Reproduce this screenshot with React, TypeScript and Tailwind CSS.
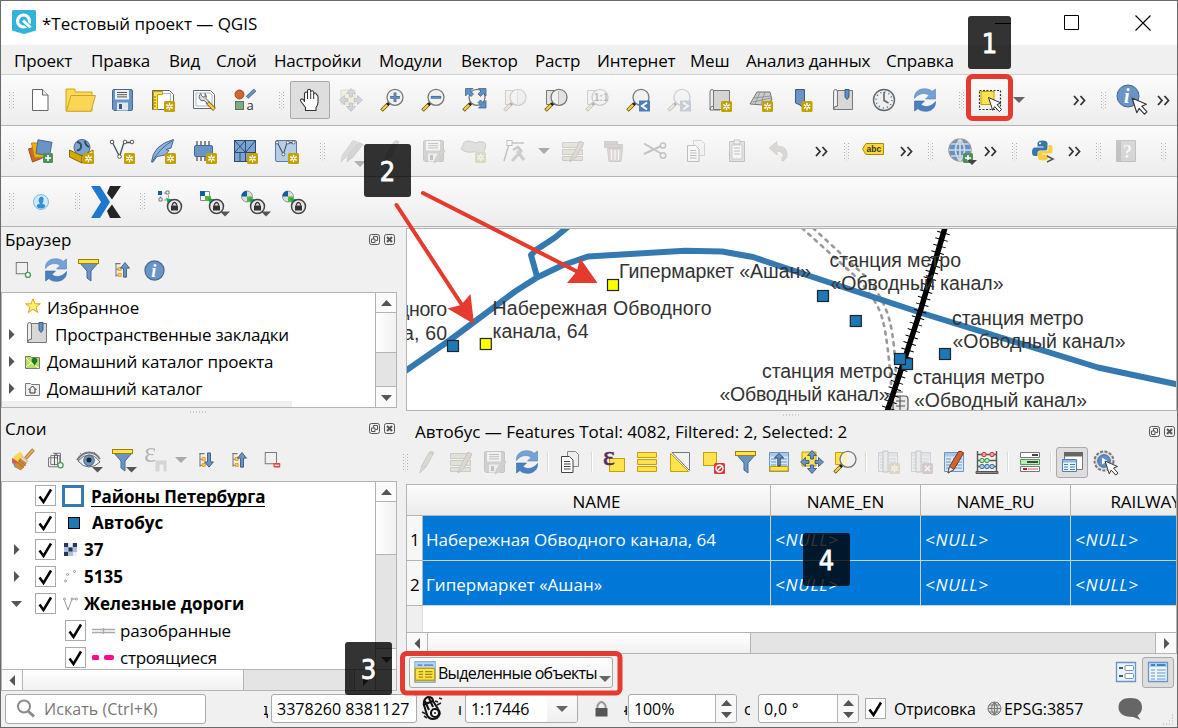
import React from "react";

type Kids = { children?: React.ReactNode };

/* ---------- drawing primitives ---------- */

const Svg = ({ children, s = 24, faded = false }: Kids & { s?: number; faded?: boolean }) => (
  <svg width={s} height={s} viewBox="0 0 24 24" fill="none" className={faded ? "shrink-0 overflow-visible opacity-30 grayscale-[60%]" : "shrink-0 overflow-visible"}>
    {children}
  </svg>
);

const Badge = ({ x = 13, y = 13 }: { x?: number; y?: number }) => (
  <g transform={`translate(${x} ${y})`}>
    <rect width="11" height="11" rx="1.500" fill="#c4a000" />
    <path d="M5.500 1.800v7.400M2.300 3.600l6.400 3.800M8.700 3.600L2.300 7.400" stroke="#fff" strokeWidth="1.400" />
    <circle cx="5.500" cy="5.500" r="1" fill="#c4a000" />
  </g>
);

const PlusBadge = ({ x = 14, y = 14 }: { x?: number; y?: number }) => (
  <g transform={`translate(${x} ${y})`}>
    <rect width="10" height="10" rx="1.500" fill="#4f8f5b" />
    <path d="M5 2v6M2 5h6" stroke="#fff" strokeWidth="1.600" />
  </g>
);

const Lens = ({ children }: Kids) => (
  <>
    <path d="M1.500 22.500L8 16" stroke="#5c4a10" strokeWidth="3.600" />
    <path d="M2 22L7.600 16.400" stroke="#fcd03a" strokeWidth="2.200" />
    <path d="M7.200 17l2.600-2.600" stroke="#222" strokeWidth="3" />
    <circle cx="15" cy="9.300" r="8" fill="#f1f1ee" stroke="#77787a" strokeWidth="1.300" />
    {children}
  </>
);

const Down = ({ dim = false }: { dim?: boolean }) => (
  <svg width="12" height="6" viewBox="0 0 12 6" className="shrink-0">
    <path d="M0 0h12L6 6z" fill={dim ? "#aaa" : "#666"} />
  </svg>
);

const CornerDown = () => <path d="M15 19h11l-5.500 5.500z" fill="#555" />;

/* ---------- icons ---------- */

const NewDoc = () => (
  <Svg><path d="M4.500 1.500h10l5.500 5.500v15.500h-15.500z" fill="#fff" stroke="#666" /><path d="M14.500 1.500v5.500h5.500" stroke="#666" fill="#eee" /></Svg>
);
const OpenFolder = () => (
  <svg width="31" height="24" viewBox="0 0 31 24" className="shrink-0">
    <path d="M1 23V1h9v3h17v19z" fill="#ffd94f" stroke="#c9a42b" />
    <path d="M1.500 23.200L6 7.500h24.500l-4.500 15.700z" fill="#fcd557" stroke="#c9a42b" />
  </svg>
);
const Save = ({ pen = false }: { pen?: boolean }) => (
  <Svg faded={pen}>
    <path d="M2.500 3q0-1.500 1.500-1.500h17q1.500 0 1.500 1.500v18q0 1.500-1.500 1.500H4L2.500 21z" fill={pen ? "#888" : "#6a94c5"} stroke={pen ? "#666" : "#48698f"} />
    <path d="M5 2h14v9.500H5z" fill="#eef1f4" /><path d="M7 4.500h10M7 6.700h10M7 8.900h10" stroke="#555" />
    <path d="M7 14.500h11v8H7z" fill="#dfe6ee" /><path d="M9 16h3v5H9z" fill="#3c5a80" />
    {pen && <path d="M13 24l1.500-4.500L21 10l3 2-6.500 9.500z" fill="#b9824a" stroke="#777" />}
  </Svg>
);
const NewLayout = () => (
  <Svg>
    <path d="M1.500 2.500h17l4 4v15h-21z" fill="#fff" stroke="#666" /><path d="M12 5.500h7.500V17" stroke="#9cb6d6" />
    <path d="M2.500 3.500h9v3h-5v15h-4z" fill="#fee34f" stroke="#c4a000" />
    <path d="M3 9h2M3 12h2M3 15h2M3 18h2" stroke="#806800" /><Badge />
  </Svg>
);
const LayoutManager = () => (
  <Svg>
    <path d="M1.500 2.500h17l4 4v14h-21z" fill="#fff" stroke="#666" /><path d="M4 5h14l2 2v11H4z" stroke="#9cb6d6" />
    <path d="M15 14l7.500 7.500" stroke="#8a6c1a" strokeWidth="4" /><path d="M15 14l7 7" stroke="#fcd557" strokeWidth="2.200" />
    <path d="M9 5.500a4 4 0 0 0-1 6q2 2 4 1l3.500 3 1.500-2-3-3q1-3-1-5l.300 3-2.300.700-1.500-1.500z" fill="#d9d9d9" stroke="#666" />
  </Svg>
);
const StyleMgr = () => (
  <Svg>
    <circle cx="6.500" cy="6.500" r="4.500" fill="#d0652f" stroke="#a14a1c" /><path d="M14 9.500L22 2" stroke="#48698f" strokeWidth="3.600" /><path d="M14 9.500L22 2" stroke="#6a94c5" strokeWidth="2" />
    <rect x="2.500" y="13.500" width="8" height="8" fill="#82a987" stroke="#4f7a55" />
    <text x="13.500" y="21.500" fontFamily="Open Sans" fontSize="13" fill="#333">a</text>
  </Svg>
);
const Hand = () => (
  <Svg>
    <path d="M7.500 22.500v-3L3 13.500q-1.200-2 .500-2.500t3 2.500V5.500q.200-1.500 1.500-1.500t1.500 1.500V3q.100-1.700 1.600-1.700T12.700 3v1q.300-1.400 1.600-1.300T15.700 4.500V6q.400-1.200 1.600-1t1.200 1.600q1.500.400 1.500 2.400v5q0 3-2 5.500v3z" fill="#fff" stroke="#333" strokeWidth="1.100" strokeLinejoin="round" />
    <path d="M9.500 5.500V11M12.700 4.500V11M15.700 6V11" stroke="#333" />
  </Svg>
);
const FourArrows = ({ faded = false }: { faded?: boolean }) => (
  <Svg faded={faded}>
    <path d="M2 2h14v14H2z" fill="#fee34f" stroke="#c4a000" />
    <path d="M12 .5l4.500 5h-3V9h-3V5.500h-3zM12 23.500l4.500-5h-3V15h-3v3.500h-3zM.5 12l5-4.500v3H9v3H5.500v3zM23.500 12l-5-4.500v3H15v3h3.500v3z" fill="#6a94c5" stroke="#3d5a80" strokeWidth=".9" />
  </Svg>
);
const ZoomIn = () => <Svg><Lens><path d="M15 4.500v9.600M10.200 9.300h9.600" stroke="#3f6796" strokeWidth="2.800" /><path d="M15 5v8.600M10.700 9.300h8.600" stroke="#6a94c5" strokeWidth="1.200" /></Lens></Svg>;
const ZoomOut = () => <Svg><Lens><path d="M9.800 9.300h10.400" stroke="#3f6796" strokeWidth="2.800" /><path d="M10.300 9.300h9.400" stroke="#6a94c5" strokeWidth="1.200" /></Lens></Svg>;
const ZoomFull = () => (
  <Svg><Lens />
    <path d="M3.500.500h7.500l-2.500 2.500 3 3-2.500 2.500-3-3L3.500 8zM24 .500h-7.500L19 3l-3 3 2.500 2.500 3-3L24 8zM24 20h-7.500l2.500-2.500-3-3 2.500-2.500 3 3 2.500-2.500z" fill="#5f8fc4" stroke="#3f6796" strokeWidth=".8" />
  </Svg>
);
const ZoomSel = ({ c, faded = false }: { c: string; faded?: boolean }) => (
  <Svg faded={faded}><path d="M2.500 2.500h12v14h-12z" fill={c} stroke="#777" /><Lens><path d="M15 2v14.600q5-1 7-5v-5q-2-4-7-4.600z" fill="#d8d8d4" opacity=".6" /><path d="M14.500 3v13" stroke="#bbb" /></Lens></Svg>
);
const ZoomNative = () => (
  <Svg faded><path d="M2.500 2.500h12v14h-12z" fill="#eee" stroke="#777" /><Lens /><text x="9" y="13" fontFamily="Liberation Sans" fontWeight="bold" fontSize="10" fill="#333">1:1</text></Svg>
);
const ZoomNav = ({ right = false }: { right?: boolean }) => (
  <Svg faded={right}><Lens /><rect x="13" y="12.500" width="11" height="11" fill="#4a7fb8" />
    <path d={right ? "M16 14.500l5 3.500-5 3.500" : "M21 14.500L16 18l5 3.500"} stroke="#fff" strokeWidth="2" />
  </Svg>
);
const MapView = () => (
  <Svg><path d="M5.500 2.500h16v19H5.500z" fill="#d5d5d3" stroke="#777" /><path d="M2 4q0-2.500 2-2.500T5.500 4v14q-3.500 0-3.500 4z" fill="#eee" stroke="#777" /><path d="M2 22h10" stroke="#777" /><Badge /></Svg>
);
const Mesh3d = () => (
  <Svg><path d="M1 16L8 4h13l2 8-9 5z" fill="#ccc" stroke="#777" /><path d="M5 10l17-2M3.500 14l19-4M11 4L6 16M16 4l-4 12" stroke="#888" strokeWidth=".8" /><Badge /></Svg>
);
const BookmarkNew = () => (
  <Svg><path d="M5.500 1.500h9v20L10 17l-4.500-2z" fill="#6a94c5" stroke="#3d5a80" /><Badge x={11.500} /></Svg>
);
const Bookmarks = () => (
  <Svg>
    <path d="M6.500 2.500h15v19h-19q0-3.500 4-3.500z" fill="#d8d8d6" stroke="#777" /><path d="M2.500 4q0-2.500 2-2.500T6.500 4v14q-4 0-4 3.500z" fill="#eee" stroke="#777" />
    <path d="M14 1.500h4V9l-2 2.500L14 9z" fill="#5f8fc4" stroke="#3d5a80" />
  </Svg>
);
const Clock = () => (
  <Svg><circle cx="12" cy="12" r="10.500" fill="#eee" stroke="#666" strokeWidth="1.400" /><circle cx="12" cy="12" r="8" stroke="#4a7fb8" strokeWidth="1.500" strokeDasharray="1.200 3" /><path d="M12 4v8.500l4.500 2.500" stroke="#666" strokeWidth="1.600" /></Svg>
);
const Refresh = () => (
  <Svg>
    <path d="M1.500 10.500C1 4 6 .7 11.500.7c3.500 0 6 1 7.500 2.800L22.500 1v10h-10L16 7.500C13 4.500 6 4.500 1.500 10.500z" fill="#76a1d4" stroke="#5483ba" strokeWidth=".6" />
    <path d="M22.500 13.500C23 20 18 23.300 12.500 23.300c-3.500 0-6-1-7.500-2.800L1.500 23V13h10L8 16.500c3 3 10 3 14.500-3z" fill="#4a80c0" stroke="#376da8" strokeWidth=".6" />
  </Svg>
);
const Pointer = ({ x = 0, y = 0 }: { x?: number; y?: number }) => (
  <path transform={`translate(${x} ${y})`} d="M0 0l12.500 5.500-4 1.600 4.500 5-2.200 2-4.600-5-2 3.700z" fill="#fff" stroke="#333" strokeWidth="1" strokeLinejoin="round" />
);
const SelectIcon = () => (
  <Svg><rect x="1.500" y="2.500" width="21" height="19" stroke="#333" strokeWidth="1.200" strokeDasharray="2 1.500" /><rect x="3" y="3.500" width="13" height="13" fill="#fee34f" stroke="#c4a000" /><Pointer x={10.500} y={9.500} /></Svg>
);
const Identify = () => (
  <svg width="34" height="32" viewBox="0 0 34 32" className="shrink-0"><circle cx="13" cy="12" r="11" fill="#6a94c5" stroke="#48698f" /><text x="9" y="19" fontFamily="Liberation Serif" fontStyle="italic" fontWeight="bold" fontSize="20" fill="#fff">i</text><g transform="translate(17 14) scale(1.150)"><Pointer /></g></svg>
);
const InfoIcon = () => (
  <Svg s={23}><circle cx="12" cy="12" r="10" fill="#6a94c5" stroke="#48698f" strokeWidth="1.200" /><text x="8.500" y="18.500" fontFamily="Liberation Serif" fontStyle="italic" fontWeight="bold" fontSize="19" fill="#fff">i</text></Svg>
);
const Sources = () => (
  <Svg><path d="M.500 10l10-3 4 12-10 4z" fill="#d0652f" stroke="#a14a1c" /><path d="M3.500 4h12v14l-9 1z" fill="#f0b000" stroke="#b58900" /><path d="M10 .800l14 2.500-2.500 13.500L8 14.500z" fill="#6a94c5" stroke="#48698f" /><PlusBadge x={15} y={14} /></Svg>
);
const Geopackage = () => (
  <Svg><circle cx="13" cy="8.500" r="8" fill="#7fa3cf" stroke="#48698f" /><path d="M8 3q5 1 4 5t-4 3M16 2q0 4 4 6" stroke="#2e4a6d" strokeWidth="2" /><path d="M.500 11l12.500 6v7l-12.500-6z" fill="#d8a800" stroke="#8a6c00" /><path d="M13 17l11-6v7l-11 6z" fill="#fdea6a" stroke="#8a6c00" /><Badge x={14} y={14} /></Svg>
);
const VLine = () => (
  <><path d="M2.500 3.500l7 14L14 3.500h7" stroke="#3f4f60" strokeWidth="1.300" /><circle cx="2" cy="3" r="1.800" fill="#fff" stroke="#555" /><circle cx="9.500" cy="17.500" r="1.800" fill="#fff" stroke="#555" /><circle cx="15" cy="3" r="1.800" fill="#fff" stroke="#555" /><circle cx="22" cy="3" r="1.800" fill="#fff" stroke="#555" /></>
);
const Shapefile = () => <Svg><VLine /><Badge x={14} y={14} /></Svg>;
const Feather = () => (
  <Svg><path d="M.500 23Q2 6 22.500.500L20 9l-5 1.500 3 1-4 4.500-8 1.500L2 23z" fill="#8fb2dc" stroke="#48698f" /><path d="M1 23Q8 10 21 2" stroke="#48698f" /><Badge x={14} y={14} /></Svg>
);
const Chip = () => (
  <Svg><path d="M5 2v20M9 2v20M13 2v20M17 2v20" stroke="#555" strokeWidth="1.300" /><rect x="2.500" y="6.500" width="18" height="11" rx="1.500" fill="#6a94c5" stroke="#48698f" /><Badge x={14} y={14} /></Svg>
);
const MeshLayer = () => (
  <Svg><rect x="1.500" y="1.500" width="21" height="21" fill="#7ba3d3" stroke="#2e4a6d" /><path d="M1.500 13.500h21M12.500 1.500v21M1.500 1.500l11 12M12.500 1.500l-11 12M12.500 13.500l10-12M7 13.500v9" stroke="#2e4a6d" /><Badge x={14} y={14} /></Svg>
);
const Virtual = () => (
  <Svg><rect x="1.500" y="1.500" width="21" height="21" rx="1.500" fill="#b7cde6" stroke="#587ba6" /><g transform="translate(1.500 1) scale(.82)"><VLine /></g><Badge x={14} y={14} /></Svg>
);
const Pencil = ({ second = false }: { second?: boolean }) => (
  <Svg faded>
    {second ? (
      <><path d="M2 23l1.500-7L14 1.500l5 2L8 17z" fill="#b59b90" stroke="#888" /><path d="M8 23l1.500-7L20 3.500l4 2L14 18z" fill="#a08a80" stroke="#777" /><path d="M15 22h12l-6 6z" fill="#222" /></>
    ) : (
      <><path d="M5 23l1.500-7L14 2.500q2-2 5 0L11 17z" fill="#bba27a" stroke="#777" /><path d="M6.500 16l4.500 1M14 2.500l5 1.500" stroke="#777" /></>
    )}
  </Svg>
);
const Polygon = () => <Svg faded><path d="M1 7q0-5 5-5t7 2q4-2 8-1t2 7-6 4-7-1-8-1-1-5z" fill="#aab5a0" stroke="#666" /><Badge x={13} y={13} /></Svg>;
const Vertex = () => <Svg faded><path d="M1 22L6 5M9 4h12" stroke="#555" strokeWidth="1.500" /><rect x="4" y="1.500" width="5" height="5" fill="#fff" stroke="#444" /><path d="M9 22l10-11M14 12l7 9" stroke="#8a7a60" strokeWidth="3" /><path d="M10 11l5-3 3 4" stroke="#666" strokeWidth="2.500" /></Svg>;
const MultiEdit = () => <Svg faded><path d="M1.500 3.500h20v5h-20zM1.500 10.500h20v5h-20zM1.500 17.500h20v4h-20z" fill="#c9c35c" stroke="#777" /><path d="M9 23l1.500-5L19 2l4 2-8.500 15z" fill="#c99a68" stroke="#666" /></Svg>;
const Trash = () => <Svg faded><path d="M2.500 2.500h13v3h-13zM2.500 5.500h18v3h-18z" fill="#b97a60" stroke="#777" /><path d="M5.500 9.500h15l-1.500 13h-12z" fill="#d98a8a" stroke="#777" /><path d="M9.500 11v10M13 11v10M16.500 11v10" stroke="#fff" strokeWidth="1.300" /></Svg>;
const Scissors = () => <Svg faded><path d="M1 4.500l17 10M1 15l17-8" stroke="#555" strokeWidth="2" /><circle cx="20" cy="6.500" r="2.600" stroke="#555" strokeWidth="1.500" /><circle cx="20" cy="16.500" r="2.800" stroke="#555" strokeWidth="1.500" /></Svg>;
const Copy = ({ faded = false }: { faded?: boolean }) => (
  <Svg faded={faded}><path d="M9.500 1.500h8l3 3v12h-11z" fill="#eee" stroke="#888" /><path d="M3.500 6.500h8l3.500 3.500v12.500H3.500z" fill="#fff" stroke="#444" /><path d="M6 11.500h6M6 14h6.500M6 16.500h6.500M6 19h6.500" stroke="#444" /></Svg>
);
const Paste = () => <Svg faded><path d="M4.500 2.500h15v20h-15z" fill="#bbb" stroke="#555" /><path d="M7 6h10v14H7z" fill="#fff" stroke="#777" /><path d="M9 9h6M9 12h6M9 15h6" stroke="#444" /><path d="M9 1h6v4H9z" fill="#ddd" stroke="#555" /></Svg>;
const Undo = () => <Svg faded><path d="M3 9l8-6.500V7q10 0 10 8 0 6-5 7v-3.500q2.500-1.500.500-4T11 12v4z" fill="#b9907a" stroke="#987" /></Svg>;
const AbcTag = () => (
  <svg width="22" height="12" viewBox="0 0 22 12" className="mb-1 shrink-0"><path d="M.500 6L4 .500h17.500v11H4z" fill="#fdd835" stroke="#a88a00" /><text x="4.500" y="9" fontFamily="Liberation Sans" fontWeight="bold" fontSize="8.500" fill="#333">abc</text></svg>
);
const Globe = () => (
  <Svg><circle cx="12" cy="11" r="11" fill="#5e93cf" stroke="#9a9a9a" strokeWidth="1.500" /><path d="M12 0v22M1 11h22M3 5h18M3 17h18M12 0Q3 11 12 22M12 0q9 11 0 22" stroke="#d8d8d8" strokeWidth="1.700" /><PlusBadge x={15} y={14} /><path d="M19 21h10l-5 5z" fill="#444" /></Svg>
);
const Python = () => (
  <Svg><path d="M11.500 1.500q-5 0-5 3v3h6v1h-8.500q-3 0-3 4.500t3 4h2.500v-3q0-2.500 3-2.500h5q2 0 2-2.500V4.500q0-3-5-3z" fill="#3b76a8" /><path d="M12 21.500q5 0 5-3v-3h-6v-1h8.500q2 0 2-4.500t-2-4h-2v3q0 3-3 3h-5q-2.500 0-2.500 2.500v4q0 3 5 3z" fill="#fccf3a" /><circle cx="9" cy="4.200" r="1" fill="#fff" /><path d="M16 17l6 3-6 3" stroke="#555" strokeWidth="1.500" /></Svg>
);
const Help = () => <Svg faded><path d="M2.500 1.500h19v21h-19z" fill="#8f9499" stroke="#555" /><path d="M3 2h4v20H3z" fill="#555" /><text x="9" y="19" fontFamily="Liberation Serif" fontWeight="bold" fontSize="18" fill="#fff">?</text></Svg>;
const Person = () => (
  <svg width="16" height="16" viewBox="0 0 16 16"><circle cx="8" cy="8" r="7.500" fill="#d3e9f8" stroke="#7db9e4" /><path d="M8 2.500q3 0 2.500 3.500T9 9.500q3 .500 3.500 2.500-1 2.500-4.500 2.500T3.500 12Q4 10 7 9.500 5.500 8 5.500 6T8 2.500z" fill="#2d93da" /></svg>
);
const BigX = () => (
  <svg width="30" height="32" viewBox="0 0 30 32" className="shrink-0"><path d="M0 0h9l10 16L9 32H0l10-16z" fill="#1e78cf" /><path d="M19 0h11L21 13.500 16 7zM19 32h11L21 18.500 16 25z" fill="#252525" /></svg>
);
const SnapIcon = ({ kind, arrow = false }: { kind: number; arrow?: boolean }) => (
  <Svg>
    {kind === 0 && <><path d="M2.500 3h8v7h-8z" stroke="#888" strokeDasharray="2 1.500" /><rect y="1" width="4" height="4" fill="#0b5fa5" /><path d="M8 1h3v3H8zM1 8h3v3H1z" fill="#fff" stroke="#777" /></>}
    {kind === 1 && <><path d="M.500 1.500h9v9h-9z" fill="#fff" stroke="#888" /><path d="M0 1h5v5H0z" fill="#0b5fa5" /><path d="M5 6h6v5H5z" fill="#5cb531" /></>}
    {kind >= 2 && <><circle cx="6" cy="6.500" r="5.500" fill="#ddd" stroke="#999" /><path d="M6 1v5.500H.500Q.500 1 6 1z" fill="#0b5fa5" /><path d="M6 6.500h5.500Q11.500 12 6 12z" fill="#5cb531" /></>}
    <path d="M8 8l7 1.500-5 5z" fill="#13a861" />
    <circle cx="16.500" cy="16.500" r="7" fill="#e8e8e8" stroke="#444" strokeWidth="1.500" /><path d="M13 15.500h7v5h-7z" fill="#333" /><path d="M14.500 15.500v-1.500q2-3 4 0v1.500" stroke="#333" strokeWidth="1.300" />
    {arrow && <path d="M20 21.500h10l-5 5z" fill="#555" />}
  </Svg>
);
const AddBox = ({ minus = false }: { minus?: boolean }) => (
  <Svg s={18}>{minus ? <><rect x="3" y="2" width="15" height="15" stroke="#777" strokeWidth="1.300" /><rect x="14" y="16" width="9" height="6" rx="1" fill="#e04545" /><path d="M15.500 19h6" stroke="#fff" strokeWidth="1.500" /></> : <><rect x="3" y="2" width="15" height="15" stroke="#777" strokeWidth="1.300" /><circle cx="18.500" cy="18.500" r="3.300" fill="#fff" stroke="#4f9a5e" strokeWidth="1.800" /></>}</Svg>
);
const Funnel = ({ arrow = false }: { arrow?: boolean }) => (
  <Svg><path d="M2.500 4.500h19L14 13v10l-4-3v-7z" fill="#6a94c5" stroke="#48698f" /><rect x="1.500" y="1.500" width="20" height="4" fill="#fee34f" stroke="#9a8200" />{arrow && <CornerDown />}</Svg>
);
const Collapse = ({ down = false }: { down?: boolean }) => (
  <Svg s={18}><path d="M3 3.500h7M4 4v17M4 11h3M4 19h3" stroke="#777" strokeWidth="1.400" /><path d="M7 8.500h4v4H7zM7 16.500h4v4H7z" fill="#fcd557" stroke="#e58a00" /><path d={down ? "M14 2.500h4v12h4l-6 7-6-7h4z" : "M14 21.500h4v-12h4l-6-7.500-6 7.500h4z"} fill="#6a94c5" stroke="#3d5a80" strokeWidth="1.200" /></Svg>
);
const Star = () => <svg width="16" height="16" viewBox="0 0 16 16"><path d="M8 .8l2 5h5.300l-4.200 3.300 1.600 5.400L8 11.300l-4.700 3.200 1.600-5.400L.700 5.800H6z" fill="#fdf06a" stroke="#dba520" /></svg>;
const Brush = () => (
  <Svg>
    <path d="M1 13q3-8 9-9l3 5-8 8z" fill="#fcd94a" /><path d="M1 10l5 3 1 6-6-4z" fill="#e5544a" /><path d="M1.500 14l6 3 2 5-6-3z" fill="#6a94c5" />
    <path d="M9 10l7 5-6 7.500-7-4z" fill="#c98a3c" /><path d="M8 12l7 6M6 14l7 6" stroke="#9c6522" strokeWidth=".7" />
    <path d="M10 8l7 6" stroke="#c9c9c9" strokeWidth="2" /><path d="M14.500 10.500L22.500 1.500" stroke="#b77b2b" strokeWidth="3.600" /><path d="M15 10L22 2" stroke="#e6b160" strokeWidth="1.800" />
  </Svg>
);
const Group = () => <Svg s={18}><path d="M2 9h12v12H2zM5 6h12v12H5zM8 3h10v13" stroke="#777" strokeWidth="1.300" /><path d="M10 19V6l2-3 2 3v6" stroke="#555" strokeWidth="1.300" /><circle cx="18" cy="19" r="3.500" fill="#fff" stroke="#4f9a5e" strokeWidth="1.800" /></Svg>;
const Eye = () => <Svg><path d="M0 12Q5 4.500 12 4.500T23 11" stroke="#777" strokeWidth="1.800" /><path d="M1 13Q6 7 12 7t11 7q-5 5-11 5T1 13z" fill="#eef1f4" stroke="#666" /><circle cx="12" cy="12.500" r="5.300" fill="#6a94c5" stroke="#48698f" /><circle cx="12" cy="12" r="2.500" fill="#222" /><path d="M3 5l2 2M18 4l-2 2" stroke="#888" /><CornerDown /></Svg>;
const EpsFilter = () => <Svg faded><text x="0" y="14" fontFamily="Liberation Serif" fontSize="29" fill="#333">ε</text><path d="M11.500 12.500h11v11h-3v-7h-4v7h-4z" fill="#999" /></Svg>;
const Eps = () => <Svg><rect x="7.500" y="8.500" width="15" height="13" fill="#fee34f" stroke="#c4a000" /><text x="1" y="15" fontFamily="Liberation Serif" fontSize="28" fill="#5a2a5a" stroke="#5a2a5a" strokeWidth=".6">ε</text></Svg>;
const SelAll = () => <Svg><path d="M2.500 2.500h19v5h-19zM2.500 9.500h19v5h-19zM2.500 16.500h19v5h-19z" fill="#fee34f" stroke="#c4a000" /></Svg>;
const Invert = () => <Svg><path d="M4 2.500h17.500v18z" fill="#f2f2f2" stroke="#777" /><path d="M2.500 3.500v18h18z" fill="#fee34f" stroke="#c4a000" /></Svg>;
const Deselect = () => <Svg><rect x="2.500" y="2.500" width="13" height="13" fill="#fee34f" stroke="#c4a000" /><rect x="13" y="13" width="11" height="11" rx="1.500" fill="#d83a3a" /><circle cx="18.500" cy="18.500" r="3.500" stroke="#fff" strokeWidth="1.400" /><path d="M16 21l5-5" stroke="#fff" strokeWidth="1.400" /></Svg>;
const Sheet = () => <><path d="M2.500 2.500h19v19h-19z" fill="#d9e8f6" stroke="#6a94c5" /><path d="M3 3h18v3.500H3z" fill="#a9c8e8" /><path d="M4 9h5M11 9h9M4 12h5M11 12h9M4 15h5M11 15h9M4 18h5M11 18h9" stroke="#6a94c5" strokeWidth="1.100" /></>;
const MoveTop = () => <Svg><Sheet /><rect x="3" y="16.500" width="18" height="4.500" fill="#fee34f" stroke="#c4a000" /><path d="M10.800 16V8h-3.500L12 3.500 16.700 8h-3.500v8z" fill="#6a94c5" stroke="#2e4a6d" /></Svg>;
const ZoomYellow = () => <Svg><path d="M2.500 2.500h12v12h-12z" fill="#fee34f" stroke="#c4a000" /><Lens><path d="M9 6q2-4 5-4v14q-5-1-5-5z" fill="#fdf3a8" opacity=".7" /></Lens></Svg>;
const Column = ({ del = false }: { del?: boolean }) => <Svg faded><Sheet /><path d="M7 1h5v21H7z" fill="#ddd" stroke="#666" />{del ? <><rect x="13" y="13" width="11" height="11" rx="1.500" fill="#c66" /><path d="M16 16l5 5M21 16l-5 5" stroke="#fff" strokeWidth="1.600" /></> : <Badge />}</Svg>;
const EditSheet = () => <Svg><Sheet /><path d="M6 23l1.500-6.500L16.500 1.500q3-1 5 1.500L12 19.500z" fill="#d0652f" stroke="#7a3a16" /><path d="M6 23l1.500-6.500 4.500 3z" fill="#eed" stroke="#555" /></Svg>;
const Abacus = () => <Svg><path d="M2.500 1v20M21.500 1v20M3 4.500h18M3 10.500h18M3 16.500h18" stroke="#555" strokeWidth="1.400" /><path d="M1 21.500h22v2H1z" fill="#888" stroke="#555" /><g strokeWidth="1"><circle cx="9" cy="4.500" r="2.200" fill="#f3a0a0" stroke="#c03030" /><circle cx="17" cy="4.500" r="2.200" fill="#f3a0a0" stroke="#c03030" /><circle cx="7" cy="10.500" r="2.200" fill="#b6e8b0" stroke="#3f8f45" /><circle cx="12" cy="10.500" r="2.200" fill="#b6e8b0" stroke="#3f8f45" /><circle cx="7" cy="16.500" r="2.200" fill="#a9cdf0" stroke="#3f6796" /><circle cx="12" cy="16.500" r="2.200" fill="#a9cdf0" stroke="#3f6796" /><circle cx="17" cy="16.500" r="2.200" fill="#a9cdf0" stroke="#3f6796" /></g></Svg>;
const CondFormat = () => <Svg><path d="M2.500 2.500h19v5h-19z" fill="#fff" stroke="#777" /><path d="M2.500 9.500h19v5h-19z" fill="#b6f0b4" stroke="#4f9a5e" /><path d="M2.500 16.500h19v5h-19z" fill="#fff" stroke="#777" /><path d="M14 5h6M9 12h11" stroke="#444" strokeWidth="1.800" /><path d="M5 19h4" stroke="#b00" strokeWidth="1.800" /><path d="M10 19h10" stroke="#f3a0a0" strokeWidth="1.800" /></Svg>;
const Dock = () => <Svg><path d="M4.500 2.500h18v17h-18z" fill="#fff" stroke="#777" /><path d="M4 2h19v4.500H4z" fill="#666" /><path d="M2.500 9.500h14v12h-14z" fill="#eef5fc" stroke="#4a7fb8" /><path d="M3 10h13v2.500H3z" fill="#8fb8e2" /><path d="M4 14.500h4M10 14.500h5M4 17h4M10 17h5M4 19.500h4M10 19.500h5" stroke="#4a7fb8" /></Svg>;
const Action = () => <Svg><circle cx="11" cy="11" r="9.500" fill="#ddd" stroke="#777" strokeWidth="2" strokeDasharray="3 1.500" /><circle cx="11" cy="11" r="6.300" fill="#5f8fc4" stroke="#48698f" /><path d="M9 7.500l5.500 3.500L9 14.500z" fill="#fff" /><Pointer x={12} y={11} /></Svg>;
const FormTable = () => <Svg s={22}><path d="M1 1h22v22H1z" fill="#eef5fc" stroke="#6a94c5" strokeWidth="1.200" /><path d="M1.500 1.500h21v6h-21z" fill="#b5d2ef" /><path d="M4 4.500h5M11 4.500h10" stroke="#6a94c5" strokeWidth="2" /><path d="M1.500 8h21v13h-21z" fill="#fee34f" stroke="#c4a000" strokeWidth="1.500" /><path d="M5 11.500h5M12 11.500h8M5 14.500h5M12 14.500h8M5 17.500h5M12 17.500h8" stroke="#a88a00" strokeWidth="1.300" /></Svg>;
const FormView = () => <Svg><path d="M2.500 2.500h19v19h-19z" fill="#edf4fb" stroke="#6a94c5" strokeWidth="1.300" /><path d="M5 8h4M5 16h4" stroke="#3d5a80" strokeWidth="2" /><rect x="11" y="5.500" width="8.500" height="5" rx="1" fill="#fff" stroke="#6a94c5" /><rect x="11" y="13.500" width="8.500" height="5" rx="1" fill="#fff" stroke="#6a94c5" /></Svg>;
const TableView = () => <Svg><path d="M2.500 2.500h19v19h-19z" fill="#edf4fb" stroke="#6a94c5" strokeWidth="1.300" /><path d="M3 3h18v4H3z" fill="#a9d0f0" /><path d="M5 5h4M11 5h8.500" stroke="#4a7fb8" strokeWidth="1.800" /><path d="M5 10h4M11 10h8.500M5 13h4M11 13h8.500M5 16h4M11 16h8.500M5 19h4M11 19h8.500" stroke="#6a94c5" strokeWidth="1.200" /></Svg>;

/* ---------- shared controls ---------- */

const Slot = ({ children, w = "w-[41px]" }: Kids & { w?: string }) => <div className={`flex shrink-0 items-center justify-center ${w}`}>{children}</div>;

const Grip = ({ w }: { w: string }) => (
  <div className={`flex shrink-0 items-center justify-center ${w}`}>
    <svg width="5" height="17" className="overflow-visible"><path d="M.5 0v17M4.500 0v17" stroke="#b3b3b3" strokeDasharray="1 2" /><path d="M2.500 1.500v16" stroke="#ccc" strokeDasharray="1 2" /></svg>
  </div>
);

const More = ({ w }: { w: string }) => (
  <Slot w={w}><svg width="13" height="11" viewBox="0 0 13 11"><path d="M1 1l4 4.500L1 10M7.500 1l4 4.500-4 4.500" fill="none" stroke="#333" strokeWidth="1.800" /></svg></Slot>
);

const Bar = ({ children, h = "h-[51px]" }: Kids & { h?: string }) => (
  <div className={`flex shrink-0 items-center overflow-hidden border-b border-[#b4b4b4] bg-linear-to-b from-[#fbfbfb] to-[#ededed] ${h}`}>{children}</div>
);

const Tri = ({ d }: { d: "u" | "d" | "l" | "r" }) => {
  const p = { u: "M0 9L5.500 3 11 9z", d: "M0 3h11L5.500 9z", l: "M8 0v11L2.500 5.500z", r: "M3 0v11l5.500-5.500z" }[d];
  return <svg width="11" height="11" viewBox="0 0 11 11" className="shrink-0"><path d={p} fill="#555" /></svg>;
};

const DockButtons = () => (
  <div className="mb-[2px] flex gap-[4px]">
    <svg width="11" height="11" viewBox="0 0 11 11" fill="none" stroke="#555"><rect x=".5" y=".5" width="10" height="10" rx="2" /><path d="M2.500 5h3.500v3.500h-3.500zM4.500 5V2.500h4V6.500h-2" /></svg>
    <svg width="11" height="11" viewBox="0 0 11 11" fill="none" stroke="#555"><rect x=".5" y=".5" width="10" height="10" rx="2" /><path d="M3 3l5 5M8 3L3 8" strokeWidth="2" /></svg>
  </div>
);

const Dots = () => <svg width="18" height="2"><path d="M0 1h18" stroke="#aaa" strokeWidth="1" strokeDasharray="1 2" /></svg>;

const Check = () => (
  <span className="flex size-[21px] shrink-0 items-center justify-center border border-[#aaa] bg-white">
    <svg width="15" height="16" viewBox="0 0 15 16"><path d="M1.500 8.500L5.500 14 13 1.500" fill="none" stroke="#000" strokeWidth="2.500" /></svg>
  </span>
);

const Expander = ({ w, open = false, none = false }: { w: string; open?: boolean; none?: boolean }) => (
  <span className={`flex shrink-0 items-center justify-center ${w}`}>{!none && <Tri d={open ? "d" : "r"} />}</span>
);

const VScroll = ({ thumb }: { thumb: string }) => (
  <div className="flex w-[21px] shrink-0 flex-col border-l border-[#b4b4b4] bg-[#e4e4e4]">
    <div className="flex h-[20px] shrink-0 items-center justify-center border-b border-[#b4b4b4] bg-[#fafafa]"><Tri d="u" /></div>
    <div className={`shrink-0 border-b border-[#b4b4b4] bg-linear-to-r from-white to-[#f1f1f1] ${thumb}`} />
    <div className="flex-1" />
    <div className="flex h-[21px] shrink-0 items-center justify-center border-t border-[#b4b4b4] bg-[#fafafa]"><Tri d="d" /></div>
  </div>
);

const HScroll = ({ thumb, tail = false }: { thumb: string; tail?: boolean }) => (
  <div className="flex h-[21px] shrink-0 border-t border-[#b4b4b4] bg-[#e4e4e4]">
    <div className="flex w-[21px] shrink-0 items-center justify-center border-r border-[#b4b4b4] bg-[#fafafa]"><Tri d="l" /></div>
    <div className={`shrink-0 border-r border-[#b4b4b4] bg-linear-to-b from-white to-[#f1f1f1] ${thumb}`} />
    <div className="flex-1" />
    <div className="flex w-[21px] shrink-0 items-center justify-center border-l border-[#b4b4b4] bg-[#fafafa]"><Tri d="r" /></div>
    {tail && <div className="w-[21px] border-l border-[#b4b4b4] bg-[#f0f0f0]" />}
  </div>
);

/* ---------- page sections ---------- */

const TitleBar = () => (
  <div className="flex h-[44px] shrink-0 items-center bg-white pl-[11px]">
    <svg width="24" height="24" viewBox="0 0 24 24" className="mb-[2px]"><path d="M0 1.500Q0 0 1.500 0h21Q24 0 24 1.500v19L12 24 0 20.500z" fill="#32b4d8" /><circle cx="11.500" cy="11" r="6" fill="none" stroke="#fff" strokeWidth="3.200" /><path d="M10.500 10.500l8.500 7.500" stroke="#32b4d8" strokeWidth="5" /><path d="M11 10.500l7.500 7" stroke="#fff" strokeWidth="3" /></svg>
    <span className="ml-[6px] pt-[2px] text-[17px] tracking-[-0.02px]">*Тестовый проект — QGIS</span>
    <div className="ml-auto flex items-center pr-[26px]">
      <svg width="16" height="16" className="mr-[53px]"><path d="M0 8.500h16" stroke="#000" /></svg>
      <svg width="16" height="16" className="mr-[55px]"><path d="M.500.500h14v14h-14z" fill="none" stroke="#000" /></svg>
      <svg width="16" height="16"><path d="M.500.500l15 15M15.500.500l-15 15" stroke="#000" strokeWidth="1.100" /></svg>
    </div>
  </div>
);

const menu: [string, string][] = [
  ["Проект", "w-[77px]"], ["Правка", "w-[78px]"], ["Вид", "w-[47px]"], ["Слой", "w-[58px]"], ["Настройки", "w-[105px]"], ["Модули", "w-[82px]"],
  ["Вектор", "w-[74px]"], ["Растр", "w-[62px]"], ["Интернет", "w-[93px]"], ["Меш", "w-[56px]"], ["Анализ данных", "w-[140px]"], ["Справка", "w-[80px]"],
];

const Browser = () => (
  <>
    <div className="flex h-[26px] shrink-0 items-center justify-between pl-[4px] pr-[2px]"><span className="tracking-[-0.1px]">Браузер</span><DockButtons /></div>
    <div className="flex h-[34px] shrink-0 items-center pl-[5px]">
      <Slot w="w-[33px]"><AddBox /></Slot><Slot w="w-[33px]"><Refresh /></Slot><Slot w="w-[33px]"><Funnel /></Slot><Slot w="w-[33px]"><Collapse /></Slot><Slot w="w-[33px]"><InfoIcon /></Slot>
    </div>
    <div className="mt-[5px] flex h-[116px] shrink-0 border border-[#b4b4b4] bg-white">
      <div className="flex flex-1 flex-col pt-[1px]">
        <div className="flex h-[27px] shrink-0 items-center"><Expander w="w-[19px]" none /><span className="mb-[3px] ml-[4px] w-[22px]"><Star /></span><span>Избранное</span></div>
        <div className="flex h-[27px] shrink-0 items-center"><Expander w="w-[19px]" /><span className="-mt-1 ml-[4px] w-[30px]"><Bookmarks /></span><span className="tracking-[-0.19px]">Пространственные закладки</span></div>
        <div className="flex h-[27px] shrink-0 items-center"><Expander w="w-[19px]" /><span className="ml-[4px] w-[22px]"><svg width="15" height="14"><path d="M.500 1.500h5l1 1h8v11h-14z" fill="#b6e05a" stroke="#777" /><path d="M1 12l5-4 8 5M6 8L1 3" stroke="#fff" fill="none" /><circle cx="9.500" cy="5.500" r="2.800" fill="#1a7a1a" /><path d="M7.500 7h4l-2 4z" fill="#1a7a1a" /></svg></span><span className="tracking-[-0.15px]">Домашний каталог проекта</span></div>
        <div className="flex h-[27px] shrink-0 items-center"><Expander w="w-[19px]" /><span className="ml-[4px] w-[22px]"><svg width="15" height="14" fill="none"><path d="M.500 1.500h5l1 1h8v11h-14z" fill="#eee" stroke="#777" /><path d="M3.500 8L7.500 4l4 4M5 7v4h5V7" stroke="#333" /></svg></span><span className="tracking-[-0.2px]">Домашний каталог</span></div>
        <div className="mt-[-1px] h-[6px] w-[290px] bg-[#efefef]" />
      </div>
      <VScroll thumb="h-[40px]" />
    </div>
  </>
);

const Layer = ({ children, open = false, none = false, sub = false }: Kids & { open?: boolean; none?: boolean; sub?: boolean }) => (
  <div className="flex h-[27px] shrink-0 items-center">
    <Expander w={sub ? "w-[63px]" : "w-[29px]"} open={open} none={none || sub} />
    <span className={sub ? "" : "ml-[4px]"}><Check /></span>
    {children}
  </div>
);

const Layers = () => (
  <>
    <div className="flex h-[8px] shrink-0 items-center justify-center"><Dots /></div>
    <div className="flex h-[26px] shrink-0 items-center justify-between pl-[4px] pr-[2px]"><span>Слои</span><DockButtons /></div>
    <div className="mt-[1px] flex h-[34px] shrink-0 items-center pl-[5px]">
      <Slot w="w-[33px]"><Brush /></Slot><Slot w="w-[33px]"><Group /></Slot><Slot w="w-[34px]"><Eye /></Slot><Slot w="w-[33px]"><Funnel arrow /></Slot><Slot w="w-[33px]"><EpsFilter /></Slot><Slot w="w-[17px]"><Down dim /></Slot>
      <Slot w="w-[33px]"><Collapse down /></Slot><Slot w="w-[33px]"><Collapse /></Slot><Slot w="w-[33px]"><AddBox minus /></Slot>
    </div>
    <div className="mt-[4px] flex h-[210px] shrink-0 flex-col border border-[#b4b4b4] bg-white">
      <div className="flex min-h-0 flex-1">
        <div className="flex flex-1 flex-col overflow-hidden">
          <Layer none><span className="ml-[6px] size-[22px] border-[3px] border-[#3579b1]" /><span className="mt-[3px] ml-[7px] border-b border-black leading-[19px] font-bold tracking-[-0.1px]">Районы Петербурга</span></Layer>
          <Layer none><span className="ml-[12px] size-[12px] border border-black bg-[#1f78b4]" /><span className="ml-[12px] pt-px font-bold tracking-[-0.03px]">Автобус</span></Layer>
          <Layer><svg className="ml-[8px]" width="13" height="13"><path d="M0 0h13v13H0z" fill="#a9bfdb" /><path d="M0 0h4v4H0zM9 0h4v4H9zM4.500 4.500h4v4h-4zM0 9h4v4H0z" fill="#27384f" /><path d="M4.500 0h4v4h-4zM9 9h4v4H9z" fill="#eef" /></svg><span className="ml-[7px] pt-px font-bold">37</span></Layer>
          <Layer><svg className="ml-[8px]" width="13" height="13" fill="none" stroke="#999"><circle cx="1.500" cy="11" r="1" /><circle cx="3.500" cy="4.500" r="1" /><circle cx="10.500" cy="1.500" r="1" /></svg><span className="ml-[7px] pt-px font-bold">5135</span></Layer>
          <Layer open><svg className="ml-[7px]" width="15" height="14" fill="none" stroke="#999"><path d="M1 2l4 11L9 2h5" /><circle cx="1.500" cy="2" r="1" fill="#fff" /><circle cx="9" cy="2" r="1" fill="#fff" /><circle cx="13.500" cy="2" r="1" fill="#fff" /></svg><span className="ml-[6px] pt-px font-bold tracking-[0px]">Железные дороги</span></Layer>
          <Layer sub><svg className="ml-[6px]" width="23" height="6"><path d="M0 1.500h23M0 4.500h23M11.500 0v6" stroke="#aaa" strokeWidth="1.300" /></svg><span className="ml-[5px] pt-px tracking-[-0.12px]">разобранные</span></Layer>
          <Layer sub><svg className="ml-[6px]" width="23" height="5"><rect width="7" height="5" rx="1.500" fill="#ff0a8a" /><rect x="12" width="10" height="5" rx="2" fill="#ff0a8a" /></svg><span className="ml-[5px] pt-px tracking-[-0.25px]">строящиеся</span></Layer>
        </div>
        <VScroll thumb="h-[53px]" />
      </div>
      <HScroll thumb="w-[221px]" tail />
    </div>
  </>
);

const Label = ({ x, y, w, children }: Kids & { x: number; y: number; w: number }) => (
  <text x={x} y={y - 0.8} textLength={w} fontFamily="Liberation Sans, sans-serif" fontSize="19.500" fill="#333">{children}</text>
);
const Node = ({ x, y, c = "#1f78b4" }: { x: number; y: number; c?: string }) => <rect x={x - 5.5} y={y - 5.5} width="11" height="11" fill={c} stroke="#1c2530" strokeWidth="1.200" />;

const RAIL = "M945.500 226L921.500 307 903 364 887 412";

const MapCanvas = () => (
  <div className="mt-[1px] h-[183px] shrink-0 border border-[#b4b4b4] bg-white">
    <svg width="769" height="181" viewBox="407 229 769 181" fill="none">
      <g stroke="#999" strokeWidth="2.600" strokeDasharray="3 5.500" strokeLinecap="round">
        <path d="M802 228L854.700 275.700Q878 300 883 321T891 384" /><path d="M813 228L864.700 275.700Q884 298 889.700 321T896 384" />
      </g>
      <g stroke="#3579b1" strokeWidth="6" strokeLinejoin="round">
        <path d="M404 372L450 340 515 291.500 537 277.500 562 265.500 588 256.500 685 250.700 722 251.500 753 257 778 265.500 920 312.500 1098 367.500 1178 384.500" />
        <path d="M537.700 279L531 255 536 250 555 237.500 569 226" />
      </g>
      <g stroke="#555" strokeWidth="1.200"><rect x="893" y="396" width="15" height="15" rx="3" fill="#e8e8e8" /><path d="M896 401h9M896 406h9M900 396v14M895 392h8" /></g>
      <path d={RAIL} stroke="#000" strokeWidth="13" strokeDasharray="1 5.800" />
      <path d={RAIL} stroke="#000" strokeWidth="5.500" />
      <Label x={619} y={279} w={192}>Гипермаркет «Ашан»</Label>
      <Label x={492.500} y={315.500} w={219}>Набережная Обводного</Label>
      <Label x={492.500} y={338.500} w={96}>канала, 64</Label>
      <Label x={398} y={317} w={49}>дного</Label>
      <Label x={403} y={340.500} w={44}>а, 60</Label>
      <Label x={829.500} y={267.500} w={131.500}>станция метро</Label>
      <Label x={830.500} y={290.500} w={173}>«Обводный канал»</Label>
      <Label x={952} y={325.500} w={131.500}>станция метро</Label>
      <Label x={952.500} y={349} w={173}>«Обводный канал»</Label>
      <Label x={762} y={379} w={131.500}>станция метро</Label>
      <Label x={719.500} y={402} w={170}>«Обводный канал»</Label>
      <Label x={913} y={384.500} w={131.500}>станция метро</Label>
      <Label x={914} y={407.500} w={173}>«Обводный канал»</Label>
      <Node x={453} y={346} /><Node x={485.800} y={344} c="#ffff00" /><Node x={613} y={285} c="#ffff00" /><Node x={823} y={296} /><Node x={855.800} y={321} /><Node x={945} y={354} /><Node x={907} y={364} /><Node x={900} y={359} />
    </svg>
  </div>
);

const Sep = ({ w }: { w: string }) => <Slot w={w}><span className="h-[20px] w-[2px] border-r border-white bg-[#dadada]" /></Slot>;

const COLS = "grid grid-cols-[16px_348px_150px_150px_150px]";

const Row = ({ n, name }: { n: string; name: string }) => (
  <div className={`h-[45px] shrink-0 ${COLS}`}>
    <div className="flex items-center border-r border-b border-[#b4b4b4] bg-[#f7f7f7] pt-[4px] pl-[3px]">{n}</div>
    <div className="flex items-center border-r border-b border-[#d0d0d0] bg-[#0078d7] pt-[4px] pl-[3px] text-white">{name}</div>
    {[0, 1, 2].map((i) => <div key={i} className="flex items-center border-r border-b border-[#d0d0d0] bg-[#0078d7] pt-[4px] pl-[4px] tracking-[0.75px] text-white italic">&lt;NULL&gt;</div>)}
  </div>
);

const AttributeTable = () => (
  <>
    <div className="flex h-[8px] shrink-0 items-center justify-center"><Dots /></div>
    <div className="flex h-[26px] shrink-0 items-center justify-between pl-[9px] pr-[2px]"><span className="tracking-[-0.02px]">Автобус — Features Total: 4082, Filtered: 2, Selected: 2</span><DockButtons /></div>
    <div className="-ml-[6px] flex h-[34px] shrink-0 items-center">
      <Grip w="w-[10px]" />
      <Slot w="w-[34px]"><Pencil /></Slot><Slot w="w-[33px]"><MultiEdit /></Slot><Slot w="w-[33px]"><Save pen /></Slot><Slot w="w-[33px]"><Refresh /></Slot><Sep w="w-[10px]" />
      <Slot w="w-[34px]"><Copy /></Slot><Sep w="w-[10px]" />
      <Slot w="w-[33px]"><Eps /></Slot><Slot w="w-[33px]"><SelAll /></Slot><Slot w="w-[33px]"><Invert /></Slot><Slot w="w-[33px]"><Deselect /></Slot><Slot w="w-[33px]"><Funnel /></Slot><Slot w="w-[33px]"><MoveTop /></Slot><Slot w="w-[33px]"><FourArrows /></Slot><Slot w="w-[33px]"><ZoomYellow /></Slot>
      <Sep w="w-[10px]" />
      <Slot w="w-[33px]"><Column /></Slot><Slot w="w-[33px]"><Column del /></Slot><Slot w="w-[33px]"><EditSheet /></Slot><Slot w="w-[33px]"><Abacus /></Slot><Sep w="w-[10px]" />
      <Slot w="w-[33px]"><CondFormat /></Slot><Sep w="w-[10px]" />
      <Slot w="w-[32px]"><span className="flex h-[31px] w-[32px] shrink-0 items-center justify-center rounded-[3px] border border-[#aaa] bg-[#dedede]"><Dock /></span></Slot><Slot w="w-[33px]"><Action /></Slot>
    </div>
    <div className="mt-[5px] flex h-[170px] shrink-0 flex-col overflow-hidden border border-[#b4b4b4] bg-white">
      <div className={`h-[31px] shrink-0 bg-linear-to-b from-[#fcfcfc] to-[#ebebeb] text-center leading-[33px] tracking-[-0.1px] ${COLS}`}>
        <div className="border-b border-[#b4b4b4]" />
        {["NAME", "NAME_EN", "NAME_RU", "RAILWAY"].map((c) => <div key={c} className="h-[31px] border-r border-b border-[#b4b4b4]">{c}</div>)}
      </div>
      <Row n="1" name="Набережная Обводного канала, 64" />
      <Row n="2" name="Гипермаркет «Ашан»" />
      <div className="w-[16px] flex-1 border-r border-[#ddd] bg-[#efefef]" />
      <HScroll thumb="w-[323px]" />
    </div>
    <div className="flex h-[36px] shrink-0 items-center pr-[3px] pl-[3px]">
      <div className="flex h-[31px] w-[204px] items-center rounded-[3px] border border-[#aaa] bg-linear-to-b from-[#fdfdfd] to-[#f1f1f1] pl-[4px]">
        <FormTable />
        <span className="ml-[2px] w-[161px] shrink-0 pt-px text-[16px] tracking-[-0.72px] whitespace-nowrap">Выделенные объекты</span>
        <span className="mt-[13px] flex shrink-0"><Down /></span>
      </div>
      <div className="ml-auto flex items-center">
        <Slot w="w-[32px]"><FormView /></Slot>
        <span className="flex h-[31px] w-[32px] items-center justify-center rounded-[3px] border border-[#aaa] bg-[#dedede]"><TableView /></span>
      </div>
    </div>
  </>
);

const Field = ({ children, w }: Kids & { w: string }) => <div className={`flex h-[29px] shrink-0 items-center overflow-hidden rounded-[3px] border border-[#aaa] bg-white pl-[5px] ${w}`}>{children}</div>;
const Spin = () => <span className="ml-auto flex h-full w-[21px] shrink-0 flex-col items-center justify-center gap-[1px] border-l border-[#b4b4b4] bg-[#f8f8f8]"><Tri d="u" /><Tri d="d" /></span>;

const Cut = ({ w, children }: Kids & { w: string }) => <span className={`flex h-[18px] shrink-0 justify-end overflow-hidden leading-[18px] ${w}`}>{children}</span>;

const StatusBar = () => (
  <div className="flex h-[35px] shrink-0 items-center pl-[4px] text-[16px] tracking-[-0.1px] whitespace-nowrap">
    <div className="flex h-[30px] w-[201px] shrink-0 items-center rounded-[3px] border border-[#aaa] bg-white pl-[10px] text-[#777]">
      <svg width="20" height="20" fill="none"><circle cx="8" cy="7.500" r="6" stroke="#8a8a8a" strokeWidth="2" /><path d="M12.500 12.500l5.500 5" stroke="#8a8a8a" strokeWidth="3" /></svg>
      <span className="ml-[8px] pt-px tracking-[0.050px]">Искать (Ctrl+K)</span>
    </div>
    <span className="ml-[58px]"><Cut w="w-[4px]">д</Cut></span>
    <span className="ml-[3px]"><Field w="w-[146px]"><span className="pt-px tracking-[0.020px]">3378260 8381127</span></Field></span>
    <Slot w="w-[32px]"><svg width="24" height="25" viewBox="0 0 24 25"><path d="M3 9q-1-6 4-8 5 0 5 4l5 8q4 5-1 9-7 3-10-3z" fill="#eee" stroke="#111" strokeWidth="2" /><path d="M4 5l4 9M8 2l4 9M2 9l10-4" stroke="#111" strokeWidth="2" /><circle cx="14" cy="17" r="4" fill="#fff" stroke="#111" strokeWidth="2.200" /><circle cx="14" cy="17" r="1" fill="#111" /><path d="M14 5l3 1M18 2l3 1M16 9l4-2M1 16l4 2M3 20l3 2" stroke="#222" strokeWidth="1.600" /></svg></Slot>
    <span className="mr-[3px] ml-[9px]"><Cut w="w-[4px]">ы</Cut></span>
    <Field w="w-[113px]"><span className="pt-px">1:17446</span><span className="ml-auto flex h-full w-[30px] items-center justify-center bg-linear-to-b from-[#fcfcfc] to-[#efefef]"><Down /></span></Field>
    <Slot w="w-[46px]"><svg width="13" height="16"><path d="M.500 7h12v8.500H.500z" fill="#555" /><path d="M2.500 7V4.500q4-7 8 0V7" fill="none" stroke="#999" strokeWidth="2" /></svg></Slot>
    <Cut w="w-[4px]">ч</Cut>
    <Field w="w-[109px]"><span className="pt-px">100%</span><Spin /></Field>
    <span className="mr-[8px] ml-[7px] flex h-[18px] w-[6px] shrink-0 overflow-hidden leading-[18px]">с</span>
    <Field w="w-[101px]"><span className="pt-px tracking-[0.300px]">0,0 °</span><Spin /></Field>
    <span className="ml-[6px]"><Check /></span>
    <span className="ml-[8px] w-[93px] shrink-0 pt-px tracking-[-0.2px]">Отрисовка</span>
    <svg width="15" height="15" fill="none" stroke="#777" className="shrink-0"><circle cx="7.500" cy="7.500" r="6.500" fill="#ddd" /><path d="M7.500 1v13M1 7.500h13M2 4h11M2 11h11M7.500 1q-6 6.500 0 13M7.500 1q6 6.500 0 13" /></svg>
    <span className="ml-[2px] w-[114px] shrink-0 pt-px tracking-[-0.050px]">EPSG:3857</span>
    <svg width="25" height="24" className="shrink-0"><path d="M12.500 1q11.500 0 11.500 9.500 0 5-4.500 8l3 4.500-7-3Q1 20 .500 10.500.500 1 12.500 1z" fill="#666" /></svg>
    <svg width="12" height="12" className="mt-auto mr-[2px] mb-[1px] ml-auto"><path d="M9 11h3M9 8h3M6 11h3M9 5h3M6 8h3M3 11h3M0 11h3M9 2h3" stroke="#aaa" strokeDasharray="1 2" /></svg>
  </div>
);

const Callout = ({ n, pos }: { n: string; pos: string }) => (
  <div className={`absolute flex h-[53px] items-center justify-center rounded-[3px] bg-black/80 pt-[2px] font-['DejaVu_Sans_Condensed','DejaVu_Sans',sans-serif] text-[27px] text-white [-webkit-text-stroke:0.8px_white] ${pos}`}>{n}</div>
);

export default function App() {
  return (
    <div className="relative flex h-[728px] w-[1178px] flex-col overflow-hidden border border-[#6a6a6a] bg-[#f0f0f0] font-['Open_Sans','Noto_Sans',sans-serif] text-[17px] leading-[24px] whitespace-nowrap text-black">
      <TitleBar />
      <div className="flex h-[30px] shrink-0 items-center border-b border-[#cfcfcf] pt-[2px] pl-[13px] tracking-[-0.2px]">
        {menu.map(([t, w]) => <span key={t} className={`shrink-0 ${w}`}>{t}</span>)}
      </div>
      <Bar>
        <Grip w="w-[18px] pl-[3px]" />
        <Slot><NewDoc /></Slot><Slot><OpenFolder /></Slot><Slot><Save /></Slot><Slot><NewLayout /></Slot><Slot><LayoutManager /></Slot><Slot><StyleMgr /></Slot>
        <Grip w="w-[24px] pl-[9px]" />
        <Slot><span className="flex h-[38px] w-[40px] items-center justify-center rounded-[2px] border border-[#aaa] bg-[#dedede]"><Hand /></span></Slot>
        <Slot><FourArrows faded /></Slot><Slot><ZoomIn /></Slot><Slot><ZoomOut /></Slot><Slot><ZoomFull /></Slot><Slot><ZoomSel c="#f0eca0" faded /></Slot><Slot><ZoomSel c="#e2e4dc" /></Slot><Slot><ZoomNative /></Slot><Slot><ZoomNav /></Slot><Slot><ZoomNav right /></Slot>
        <Slot><MapView /></Slot><Slot><Mesh3d /></Slot><Slot><BookmarkNew /></Slot><Slot><Bookmarks /></Slot><Slot><Clock /></Slot><Slot><Refresh /></Slot>
        <Grip w="w-[24px] pl-[8px]" />
        <Slot w="w-[41px]"><SelectIcon /></Slot><Slot w="w-[18px]"><Down /></Slot>
        <More w="ml-[41px] w-[20px]" /><Grip w="w-[28px]" /><Slot w="w-[30px]"><Identify /></Slot><More w="w-[33px]" />
      </Bar>
      <Bar>
        <Grip w="w-[18px] pl-[3px]" />
        <Slot><Sources /></Slot><Slot><Geopackage /></Slot><Slot><Shapefile /></Slot><Slot><Feather /></Slot><Slot><Chip /></Slot><Slot><MeshLayer /></Slot><Slot><Virtual /></Slot>
        <Grip w="w-[24px] pl-[9px]" />
        <Slot><Pencil second /></Slot><Slot><Pencil /></Slot><Slot><Save pen /></Slot><Slot><Polygon /></Slot><Slot><Vertex /></Slot><Slot w="w-[17px]"><Down dim /></Slot>
        <Slot><MultiEdit /></Slot><Slot><Trash /></Slot><Slot><Scissors /></Slot><Slot><Copy faded /></Slot><Slot><Paste /></Slot><Slot><Undo /></Slot>
        <More w="ml-[3px] w-[41px]" /><Grip w="w-[9px]" /><Slot w="w-[44px]"><AbcTag /></Slot><More w="w-[22px]" />
        <Grip w="w-[27px]" /><Slot w="w-[31px]"><Globe /></Slot><More w="w-[31px]" /><Grip w="w-[17px]" />
        <Slot w="w-[39px]"><Python /></Slot><More w="w-[24px]" /><Grip w="w-[24px]" /><Slot w="w-[32px]"><Help /></Slot><Grip w="w-[42px]" />
      </Bar>
      <Bar h="h-[50px]">
        <Grip w="w-[19px] pl-[2px]" />
        <Slot><Person /></Slot><Grip w="w-[32px]" /><Slot w="w-[26px]"><BigX /></Slot><Grip w="w-[47px]" />
        <Slot w="w-[8px]"><SnapIcon kind={0} /></Slot><Slot w="ml-[17px] w-[41px]"><SnapIcon kind={1} arrow /></Slot><Slot><SnapIcon kind={2} arrow /></Slot><Slot><SnapIcon kind={3} /></Slot>
      </Bar>
      <div className="flex h-[464px] shrink-0">
        <div className="flex w-[396px] shrink-0 flex-col"><Browser /><Layers /></div>
        <div className="ml-[9px] flex w-[771px] shrink-0 flex-col"><MapCanvas /><AttributeTable /></div>
      </div>
      <StatusBar />

      <svg className="absolute top-[-1px] left-[-1px]" width="1178" height="728" fill="none">
        <g stroke="#e53a2e" strokeWidth="4" strokeLinecap="round"><path d="M396.500 205L462 305M423 193L578 272" /></g>
        <path d="M474 324L470.500 294 461 305 447.500 308.500zM597.500 283L580 258 577 271 567 283z" fill="#e53a2e" />
        <rect x="968.500" y="76.500" width="42" height="42" rx="4" stroke="#e53a2e" strokeWidth="5" />
        <rect x="402.500" y="653.500" width="217.500" height="39.500" rx="4" stroke="#e53a2e" strokeWidth="5" />
      </svg>
      <Callout n="1" pos="left-[967px] top-[15px] w-[43px]" />
      <Callout n="2" pos="left-[363px] top-[143px] w-[47px]" />
      <Callout n="3" pos="left-[344px] top-[641px] w-[47px]" />
      <Callout n="4" pos="left-[802px] top-[532px] w-[47px]" />
    </div>
  );
}
